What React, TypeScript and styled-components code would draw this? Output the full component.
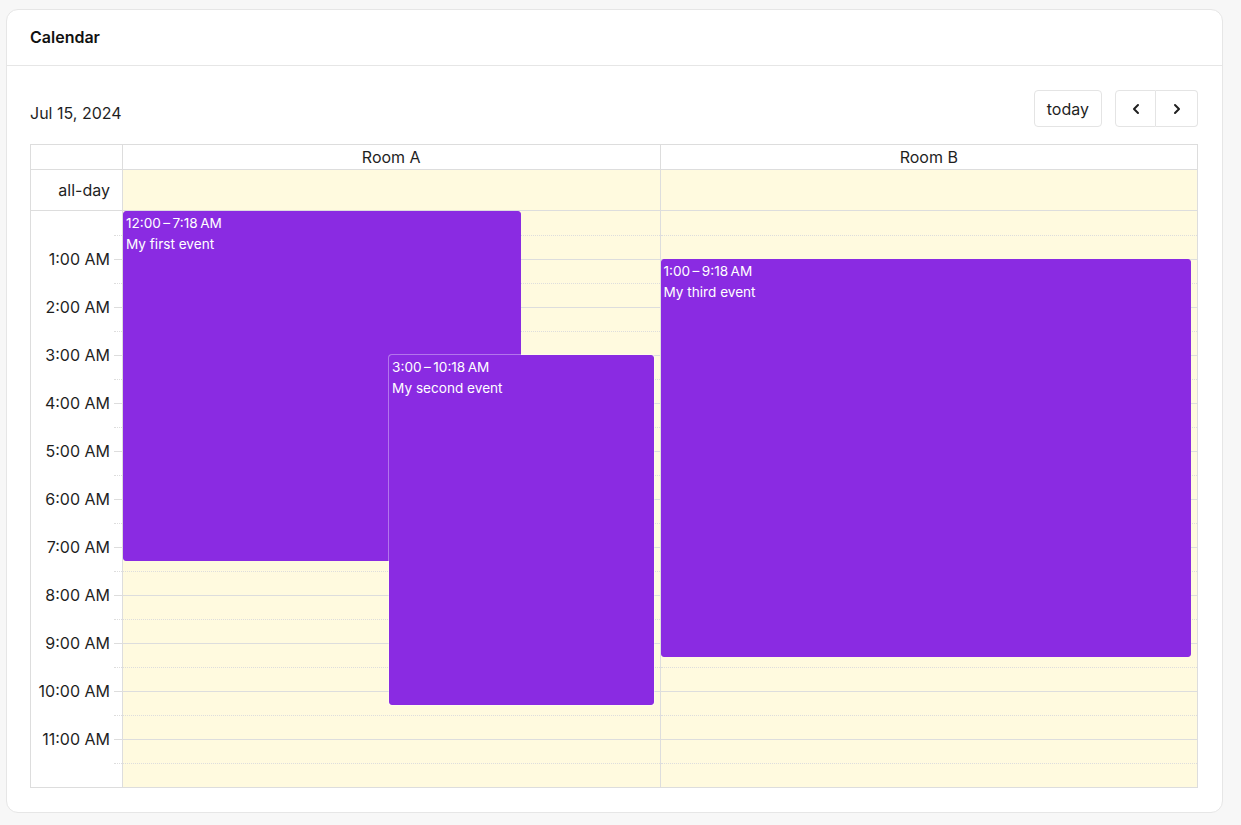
import React from 'react'
import styled, { createGlobalStyle } from 'styled-components'
import { ChevronLeft, ChevronRight } from 'lucide-react'

const GlobalStyle = createGlobalStyle`
  * { box-sizing: border-box; }
  body {
    margin: 0;
    background: #f7f7f7;
    font-family: Inter, "Noto Sans", sans-serif;
    color: #1f1f1f;
  }
`

const SLOT = 24
const HOUR = SLOT * 2
const BORDER = '#dddddd'

const Page = styled.div`
  padding: 9px 0 12px 6px;
`

const Card = styled.div`
  width: 1217px;
  background: #fff;
  border: 1px solid #e6e6e6;
  border-radius: 12px;
`

const CardHeader = styled.div`
  height: 56px;
  padding: 0 23px 1px;
  display: flex;
  align-items: center;
  border-bottom: 1px solid #e6e6e6;

  h2 {
    margin: 0;
    font-size: 16px;
    font-weight: 600;
    color: #111;
  }
`

const CardBody = styled.div`
  padding: 24px 24px 24px 23px;
`

const Toolbar = styled.div`
  display: flex;
  align-items: center;
  justify-content: space-between;
  margin-bottom: 17px;
`

const Title = styled.div`
  font-size: 16px;
  padding-top: 9px;
`

const ToolbarRight = styled.div`
  display: flex;
  gap: 13px;
`

const Button = styled.button`
  height: 37px;
  min-width: 41px;
  padding: 0 12px;
  display: flex;
  align-items: center;
  justify-content: center;
  background: #fff;
  border: 1px solid #e4e4e4;
  border-radius: 4px;
  font-family: inherit;
  font-size: 16px;
  color: #1f1f1f;
  cursor: pointer;
`

const ButtonGroup = styled.div`
  display: flex;

  ${Button} {
    width: 41px;
    padding: 0;
  }
  ${Button}:first-child {
    border-radius: 4px 0 0 4px;
  }
  ${Button}:last-child {
    border-radius: 0 4px 4px 0;
    border-left: none;
    width: 42px;
  }
`

const Grid = styled.div`
  display: grid;
  grid-template-columns: 92px 1fr 1fr;
  border-top: 1px solid ${BORDER};
  border-left: 1px solid ${BORDER};
  font-size: 16px;
`

const Cell = styled.div<{ $today?: boolean }>`
  border-right: 1px solid ${BORDER};
  border-bottom: 1px solid ${BORDER};
  background: ${p => (p.$today ? 'rgba(255, 220, 40, 0.15)' : '#fff')};
`

const HeaderCell = styled(Cell)`
  height: 25px;
  display: flex;
  align-items: center;
  justify-content: center;
`

const AllDayCell = styled(Cell)`
  height: 41px;
  display: flex;
  align-items: center;
  justify-content: flex-end;
  padding-right: 12px;
`

const AxisCell = styled(Cell)`
  display: grid;
  grid-template-columns: 1fr 8px;
`

const AxisLabels = styled.div`
  padding-top: ${SLOT}px;
  display: flex;
  flex-direction: column;
`

const AxisLabel = styled.div`
  height: ${HOUR}px;
  line-height: ${HOUR}px;
  text-align: right;
  padding-right: 4px;
  white-space: nowrap;
`

const SlotStack = styled.div`
  display: flex;
  flex-direction: column;
`

const Slot = styled.div<{ $line: 'none' | 'solid' | 'dotted' }>`
  height: ${SLOT}px;
  border-top: ${p => (p.$line === 'none' ? '1px solid transparent' : `1px ${p.$line} ${BORDER}`)};
`

const LaneCell = styled(Cell)`
  position: relative;
`

const Event = styled.div<{ $inset?: boolean }>`
  position: absolute;
  background: #8a2be2;
  border: 1px solid #8a2be2;
  border-radius: 3px;
  color: #fff;
  font-size: 13.6px;
  padding: 2px 2px 0;
  overflow: hidden;
  box-shadow: ${p => (p.$inset ? '0 0 0 1px rgba(255, 255, 255, 0.35)' : 'none')};
  z-index: ${p => (p.$inset ? 2 : 1)};
`

const EventTime = styled.div`
  line-height: 19px;
  white-space: nowrap;
`

const EventTitle = styled.div`
  line-height: 19px;
  margin-top: 2px;
  white-space: nowrap;
`

type CalEvent = {
  start: number
  end: number
  time: string
  title: string
  left: string
  right: string
  inset?: boolean
}

const resources: { name: string; events: CalEvent[] }[] = [
  {
    name: 'Room A',
    events: [
      { start: 0, end: 7.3, time: '12:00\u2009–\u20097:18\u202fAM', title: 'My first event', left: '0px', right: '25.9%' },
      { start: 3, end: 10.3, time: '3:00\u2009–\u200910:18\u202fAM', title: 'My second event', left: '49.6%', right: '6px', inset: true },
    ],
  },
  {
    name: 'Room B',
    events: [
      { start: 1, end: 9.3, time: '1:00\u2009–\u20099:18\u202fAM', title: 'My third event', left: '0px', right: '6px' },
    ],
  },
]

const slots = Array.from({ length: 24 }, (_, i) => i)
const hours = Array.from({ length: 11 }, (_, i) => `${i + 1}:00 AM`)

const lineFor = (i: number) => (i === 0 ? 'none' : i % 2 === 0 ? 'solid' : 'dotted')

export default function App() {
  return (
    <>
      <GlobalStyle />
      <Page>
        <Card>
          <CardHeader>
            <h2>Calendar</h2>
          </CardHeader>
          <CardBody>
            <Toolbar>
              <Title>Jul 15, 2024</Title>
              <ToolbarRight>
                <Button>today</Button>
                <ButtonGroup>
                  <Button aria-label="prev">
                    <ChevronLeft size={16} strokeWidth={3} />
                  </Button>
                  <Button aria-label="next">
                    <ChevronRight size={16} strokeWidth={3} />
                  </Button>
                </ButtonGroup>
              </ToolbarRight>
            </Toolbar>

            <Grid>
              <HeaderCell />
              {resources.map(r => (
                <HeaderCell key={r.name}>{r.name}</HeaderCell>
              ))}

              <AllDayCell>all-day</AllDayCell>
              {resources.map(r => (
                <Cell key={r.name} $today />
              ))}

              <AxisCell>
                <AxisLabels>
                  {hours.map(h => (
                    <AxisLabel key={h}>{h}</AxisLabel>
                  ))}
                </AxisLabels>
                <SlotStack>
                  {slots.map(i => (
                    <Slot key={i} $line={lineFor(i)} />
                  ))}
                </SlotStack>
              </AxisCell>

              {resources.map(r => (
                <LaneCell key={r.name} $today>
                  <SlotStack>
                    {slots.map(i => (
                      <Slot key={i} $line={lineFor(i)} />
                    ))}
                  </SlotStack>
                  {r.events.map(ev => (
                    <Event
                      key={ev.title}
                      $inset={ev.inset}
                      style={{
                        top: ev.start * HOUR,
                        height: (ev.end - ev.start) * HOUR,
                        left: ev.left,
                        right: ev.right,
                      }}
                    >
                      <EventTime>{ev.time}</EventTime>
                      <EventTitle>{ev.title}</EventTitle>
                    </Event>
                  ))}
                </LaneCell>
              ))}
            </Grid>
          </CardBody>
        </Card>
      </Page>
    </>
  )
}
